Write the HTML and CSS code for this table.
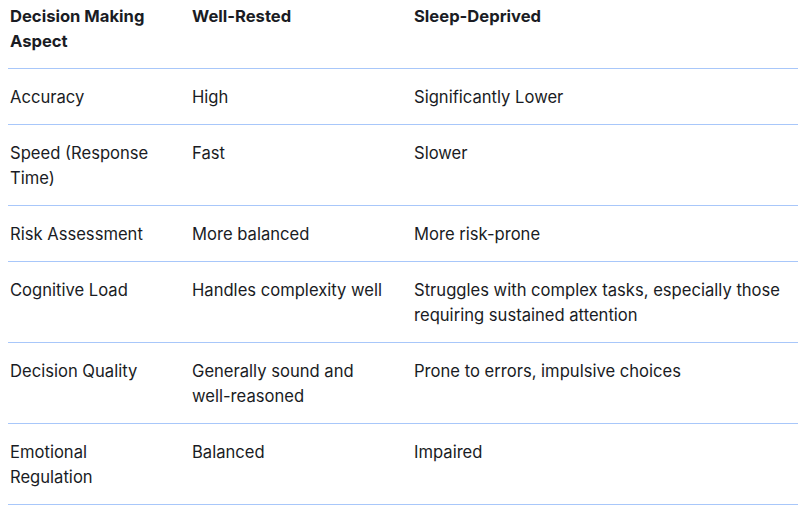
FILE: index.html
```html
<!DOCTYPE html>
<html>
<head>
<meta charset="utf-8">
<link rel="stylesheet" href="styles.css">
</head>
<body>
<table class="cmp">
  <colgroup>
    <col class="c1"><col class="c2"><col class="c3">
  </colgroup>
  <thead>
    <tr><th>Decision Making Aspect</th><th>Well-Rested</th><th>Sleep-Deprived</th></tr>
  </thead>
  <tbody>
    <tr><td>Accuracy</td><td>High</td><td>Significantly Lower</td></tr>
    <tr><td>Speed (Response Time)</td><td>Fast</td><td>Slower</td></tr>
    <tr><td>Risk Assessment</td><td>More balanced</td><td>More risk-prone</td></tr>
    <tr><td>Cognitive Load</td><td>Handles complexity well</td><td>Struggles with complex tasks, especially those requiring sustained attention</td></tr>
    <tr><td>Decision Quality</td><td>Generally sound and well-reasoned</td><td>Prone to errors, impulsive choices</td></tr>
    <tr><td>Emotional Regulation</td><td>Balanced</td><td>Impaired</td></tr>
  </tbody>
</table>
</body>
</html>
```
FILE: styles.css
```css
html, body {
  margin: 0;
  padding: 0;
  background: #ffffff;
}
body {
  padding: 0 3px 0 8px;
  font-family: Inter, Roboto, "Noto Sans", Arial, sans-serif;
  font-size: 16.6px;
  line-height: 25px;
  color: #1a1c24;
}
.cmp {
  width: 790px;
  border-collapse: collapse;
  table-layout: fixed;
}
.c1 { width: 182px; }
.c2 { width: 222px; }
.c3 { width: 386px; }
.cmp th, .cmp td {
  text-align: left;
  vertical-align: top;
  padding: 16px 24px 14px 2px;
  border-bottom: 1px solid #a8c7fa;
}
.cmp th:last-child, .cmp td:last-child {
  padding-right: 0;
}
.cmp th {
  font-weight: 700;
  padding-top: 4px;
}
```
